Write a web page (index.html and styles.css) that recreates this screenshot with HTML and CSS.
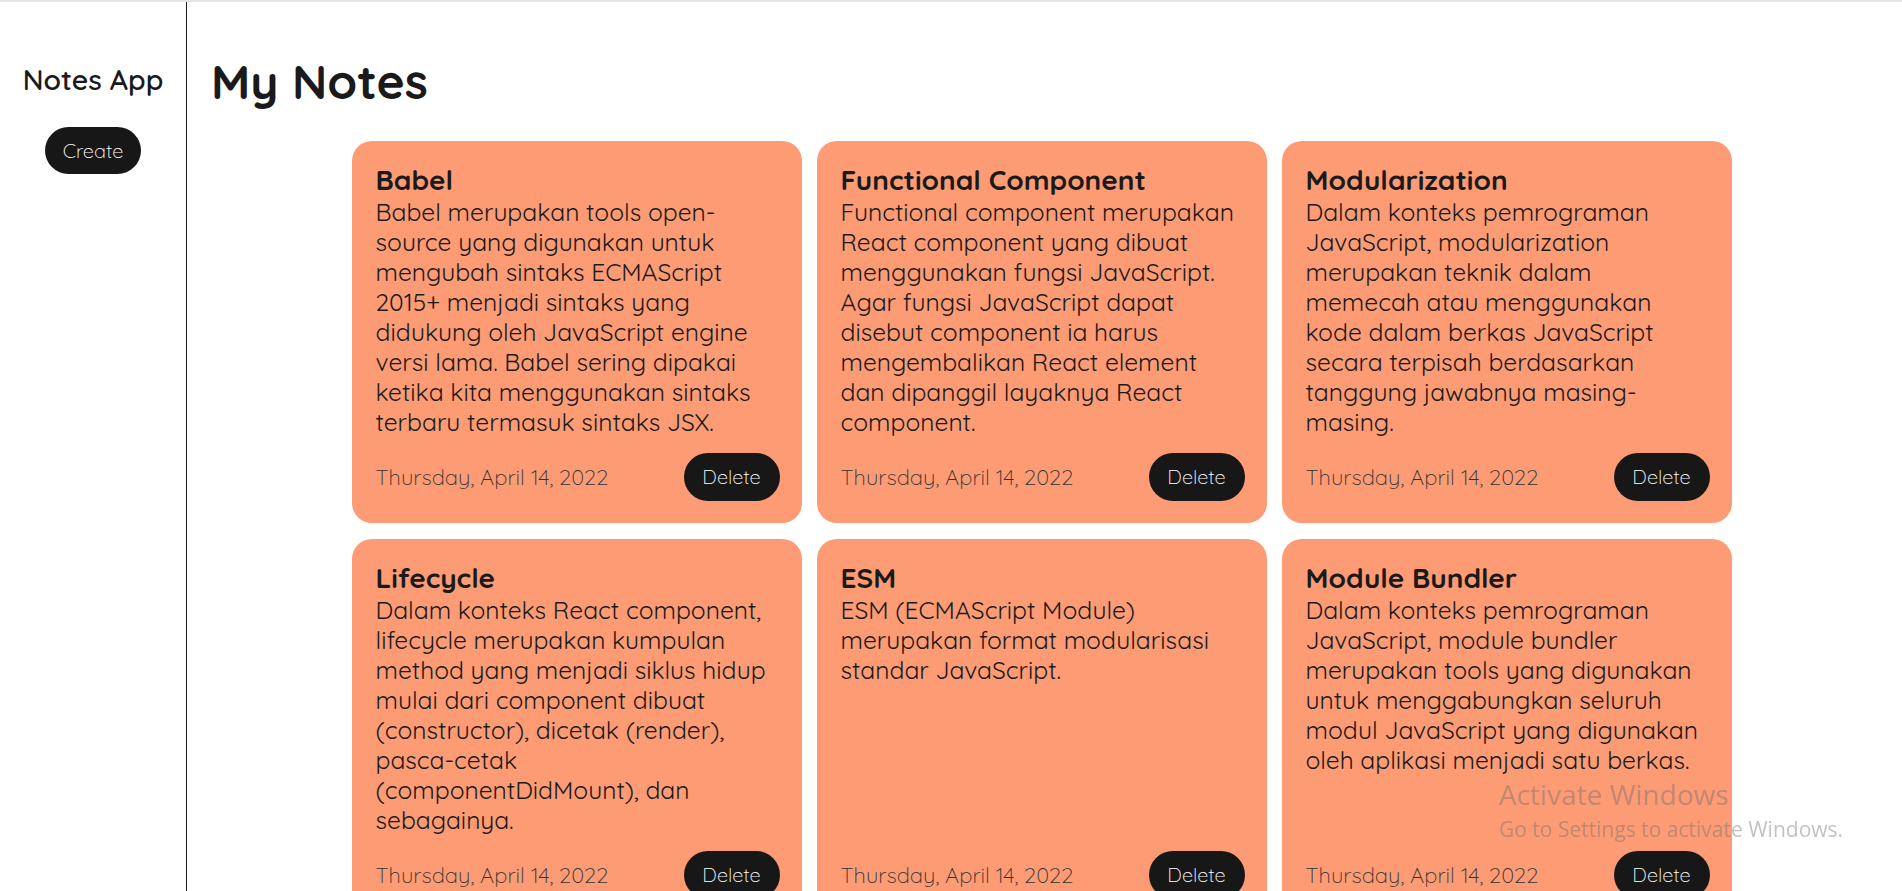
FILE: index.html
```html
<!DOCTYPE html>
<html lang="id">
<head>
<meta charset="utf-8">
<title>Notes App</title>
<link rel="stylesheet" href="styles.css">
</head>
<body>
<div class="app">
  <aside class="sidebar">
    <h2 class="brand">Notes App</h2>
    <button class="btn">Create</button>
  </aside>
  <main class="main">
    <h1 class="page-title">My Notes</h1>
    <section class="notes">
      <article class="note">
        <h3 class="note-title">Babel</h3>
        <p class="note-body">Babel merupakan tools open-source yang digunakan untuk mengubah sintaks ECMAScript 2015+ menjadi sintaks yang didukung oleh JavaScript engine versi lama. Babel sering dipakai ketika kita menggunakan sintaks terbaru termasuk sintaks JSX.</p>
        <div class="note-footer"><span class="note-date">Thursday, April 14, 2022</span><button class="btn">Delete</button></div>
      </article>
      <article class="note">
        <h3 class="note-title">Functional Component</h3>
        <p class="note-body">Functional component merupakan React component yang dibuat menggunakan fungsi JavaScript. Agar fungsi JavaScript dapat disebut component ia harus mengembalikan React element dan dipanggil layaknya React component.</p>
        <div class="note-footer"><span class="note-date">Thursday, April 14, 2022</span><button class="btn">Delete</button></div>
      </article>
      <article class="note">
        <h3 class="note-title">Modularization</h3>
        <p class="note-body">Dalam konteks pemrograman JavaScript, modularization merupakan teknik dalam memecah atau menggunakan kode dalam berkas JavaScript secara terpisah berdasarkan tanggung jawabnya masing-masing.</p>
        <div class="note-footer"><span class="note-date">Thursday, April 14, 2022</span><button class="btn">Delete</button></div>
      </article>
      <article class="note">
        <h3 class="note-title">Lifecycle</h3>
        <p class="note-body">Dalam konteks React component, lifecycle merupakan kumpulan method yang menjadi siklus hidup mulai dari component dibuat (constructor), dicetak (render), pasca-cetak (componentDidMount), dan sebagainya.</p>
        <div class="note-footer"><span class="note-date">Thursday, April 14, 2022</span><button class="btn">Delete</button></div>
      </article>
      <article class="note">
        <h3 class="note-title">ESM</h3>
        <p class="note-body">ESM (ECMAScript Module) merupakan format modularisasi standar JavaScript.</p>
        <div class="note-footer"><span class="note-date">Thursday, April 14, 2022</span><button class="btn">Delete</button></div>
      </article>
      <article class="note">
        <h3 class="note-title">Module Bundler</h3>
        <p class="note-body">Dalam konteks pemrograman JavaScript, module bundler merupakan tools yang digunakan untuk menggabungkan seluruh modul JavaScript yang digunakan oleh aplikasi menjadi satu berkas.</p>
        <div class="note-footer"><span class="note-date">Thursday, April 14, 2022</span><button class="btn">Delete</button></div>
      </article>
    </section>
  </main>
</div>
<div class="watermark">
  <div class="wm-title">Activate Windows</div>
  <div class="wm-sub">Go to Settings to activate Windows.</div>
</div>
</body>
</html>
```

FILE: styles.css
```css
html {
  background: #ffffff;
  scrollbar-width: none;
}

::-webkit-scrollbar {
  width: 0;
  height: 0;
}

body {
  margin: 0;
  border-top: 2px solid #e5e5e5;
  font-family: "Quicksand", "Open Sans", "Noto Sans", sans-serif;
  color: #1a1a1a;
  background: #ffffff;
}

.app {
  display: flex;
  min-height: calc(100vh - 2px);
}

.sidebar {
  width: 187px;
  flex-shrink: 0;
  border-right: 1px solid #1a1a1a;
  display: flex;
  flex-direction: column;
  align-items: center;
  padding-top: 60px;
  box-sizing: border-box;
}

.brand {
  margin: 0;
  font-size: 28.4px;
  line-height: 35px;
  font-weight: 600;
  color: #1a1a1a;
}

.btn {
  margin: 0;
  border: none;
  background: #171717;
  color: #ffffff;
  font-family: "Quicksand", "Open Sans", "Noto Sans", sans-serif;
  font-size: 20px;
  font-weight: 300;
  line-height: 24px;
  width: 96px;
  height: 48px;
  padding: 0;
  border-radius: 24px;
  cursor: pointer;
}

.sidebar .btn {
  margin-top: 30px;
  height: 47px;
}

.main {
  flex: 1;
  padding: 49px 30px 40px 24px;
  min-width: 0;
}

.page-title {
  margin: 0;
  font-size: 48px;
  line-height: 60px;
  font-weight: 700;
  color: #1a1a1a;
}

.notes {
  margin-top: 30px;
  display: grid;
  grid-template-columns: repeat(3, 450px);
  column-gap: 15px;
  row-gap: 16px;
  justify-content: center;
}

.note {
  background: #fd9b74;
  border-radius: 20px;
  padding: 21px 22px 22px 24px;
  display: flex;
  flex-direction: column;
}

.note-title {
  margin: 0;
  font-size: 28px;
  line-height: 35px;
  font-weight: 700;
  color: #1a1a1a;
}

.note-body {
  margin: 0;
  flex: 1;
  font-size: 24.6px;
  line-height: 30px;
  font-weight: 400;
  color: #1a1a1a;
}

.note-footer {
  margin-top: 16px;
  display: flex;
  justify-content: space-between;
  align-items: center;
}

.note-date {
  font-size: 22px;
  font-weight: 300;
  color: #333333;
}

.watermark {
  position: fixed;
  left: 1499px;
  top: 777px;
  color: rgba(110, 110, 110, 0.42);
  font-family: "Open Sans", "Noto Sans", sans-serif;
  pointer-events: none;
}

.wm-title {
  font-size: 28px;
  line-height: 34px;
}

.wm-sub {
  margin-top: 5px;
  font-size: 21px;
  line-height: 27px;
  white-space: nowrap;
}
```
